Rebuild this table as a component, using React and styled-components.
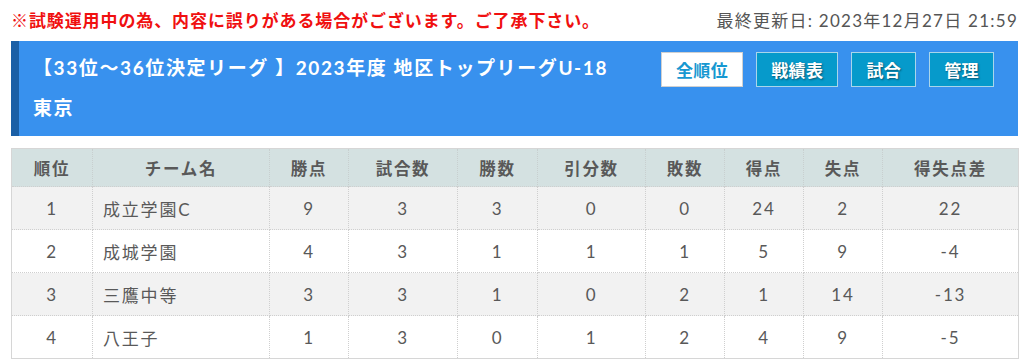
import React from "react";
import styled, { createGlobalStyle } from "styled-components";

const Global = createGlobalStyle`
  html, body { margin: 0; padding: 0; background: #fff; }
  body { font-family: Lato, "Noto Sans CJK JP", sans-serif; }
`;

const Page = styled.div`
  width: 1024px;
  padding: 0 6px 0 11px;
  box-sizing: border-box;
`;

const TopBar = styled.div`
  display: flex;
  justify-content: space-between;
  align-items: center;
  height: 41px;
  padding-bottom: 2px;
  box-sizing: border-box;
`;

const Notice = styled.div`
  color: #f01010;
  font-weight: 700;
  font-size: 17px;
  letter-spacing: 0.9px;
  font-family: "Noto Sans CJK JP", sans-serif;
`;

const Updated = styled.div`
  color: #555;
  font-size: 17px;
  letter-spacing: 1.25px;
  font-family: Lato, "Noto Sans CJK JP", sans-serif;
`;

const Header = styled.div`
  display: flex;
  justify-content: space-between;
  align-items: flex-start;
  background: #3891ee;
  border-left: 8px solid #1a5fa6;
  height: 95px;
  box-sizing: border-box;
  padding: 10px 24px 0 14px;
`;

const Title = styled.h1`
  margin: 0;
  color: #fff;
  font-weight: 700;
  font-size: 19px;
  line-height: 40px;
  letter-spacing: 1.6px;
  font-family: Lato, "Noto Sans CJK JP", sans-serif;
  margin-top: -3px;
`;

const Buttons = styled.div`
  display: flex;
  gap: 13px;
  padding-top: 1px;
`;

const Btn = styled.div`
  height: 35px;
  box-sizing: border-box;
  padding: 0 14px;
  display: flex;
  align-items: center;
  justify-content: center;
  font-weight: 700;
  font-size: 17px;
  letter-spacing: 0.4px;
  font-family: "Noto Sans CJK JP", sans-serif;
  background: ${(p) => (p.$active ? "#fff" : "#069acb")};
  color: ${(p) => (p.$active ? "#1798d1" : "#fff")};
  border: 1px solid ${(p) => (p.$active ? "#d0d0d0" : "#a9d6ea")};
  text-shadow: ${(p) => (p.$active ? "none" : "1px 1px 2px rgba(0,0,0,0.45)")};
`;

const Table = styled.table`
  margin-top: 12px;
  width: 1007px;
  border-collapse: collapse;
  table-layout: fixed;
  border: 1px solid #d6d6d6;
  font-family: Lato, "Noto Sans CJK JP", sans-serif;
  color: #595959;
  font-size: 17px;
`;

const Th = styled.th`
  background: #d4e1e1;
  font-weight: 700;
  font-size: 16.5px;
  height: 37px;
  padding: 0;
  border-left: 1px dotted #c8cfcf;
  letter-spacing: 1.7px;
`;

const Tr = styled.tr`
  background: ${(p) => (p.$odd ? "#f2f2f2" : "#fff")};
`;

const Td = styled.td`
  height: 42px;
  padding: 0 ${(p) => (p.$left ? "10px" : "0")};
  text-align: ${(p) => (p.$left ? "left" : "center")};
  border: 1px dotted #cfcfcf;
  letter-spacing: 1.8px;
`;

const cols = [81, 177, 79, 109, 80, 108, 79, 79, 79, 136];
const heads = ["順位", "チーム名", "勝点", "試合数", "勝数", "引分数", "敗数", "得点", "失点", "得失点差"];
const rows = [
  ["1", "成立学園C", "9", "3", "3", "0", "0", "24", "2", "22"],
  ["2", "成城学園", "4", "3", "1", "1", "1", "5", "9", "-4"],
  ["3", "三鷹中等", "3", "3", "1", "0", "2", "1", "14", "-13"],
  ["4", "八王子", "1", "3", "0", "1", "2", "4", "9", "-5"],
];

export default function App() {
  return (
    <Page>
      <Global />
      <TopBar>
        <Notice>※試験運用中の為、内容に誤りがある場合がございます。ご了承下さい。</Notice>
        <Updated>最終更新日: 2023年12月27日 21:59</Updated>
      </TopBar>
      <Header>
        <Title>
          【33位〜36位決定リーグ 】2023年度 地区トップリーグU-18
          <br />
          東京
        </Title>
        <Buttons>
          <Btn $active>全順位</Btn>
          <Btn>戦績表</Btn>
          <Btn>試合</Btn>
          <Btn>管理</Btn>
        </Buttons>
      </Header>
      <Table>
        <colgroup>
          {cols.map((w, i) => (
            <col key={i} style={{ width: w }} />
          ))}
        </colgroup>
        <thead>
          <tr>
            {heads.map((h) => (
              <Th key={h}>{h}</Th>
            ))}
          </tr>
        </thead>
        <tbody>
          {rows.map((r, i) => (
            <Tr key={i} $odd={i % 2 === 0}>
              {r.map((c, j) => (
                <Td key={j} $left={j === 1}>{c}</Td>
              ))}
            </Tr>
          ))}
        </tbody>
      </Table>
    </Page>
  );
}
